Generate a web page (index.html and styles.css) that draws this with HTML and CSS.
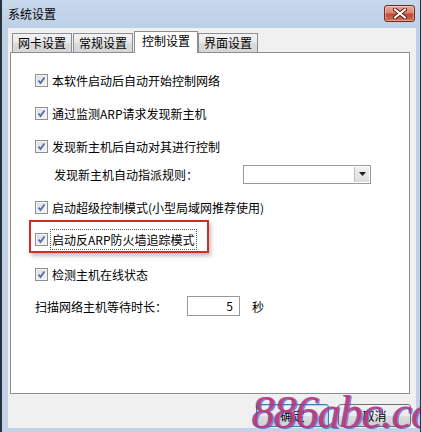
FILE: index.html
```html
<!DOCTYPE html>
<html lang="zh-CN">
<head>
  <meta charset="UTF-8" />
  <title>系统设置</title>
  <link rel="stylesheet" href="styles.css">
</head>
<body>
  <div class="window">
    <div class="titlebar">
      <span class="title">系统设置</span>
      <button class="close-btn">
        <svg width="14" height="11" viewBox="0 0 14 11">
          <path d="M2 1.5 L12 9.5 M12 1.5 L2 9.5" stroke="#5a1e16" stroke-width="4" stroke-linecap="round"/>
          <path d="M2 1.5 L12 9.5 M12 1.5 L2 9.5" stroke="#ffffff" stroke-width="2.2" stroke-linecap="round"/>
        </svg>
      </button>
    </div>

    <div class="client">
      <div class="tabs">
        <div class="tab">网卡设置</div>
        <div class="tab">常规设置</div>
        <div class="tab active">控制设置</div>
        <div class="tab">界面设置</div>
      </div>

      <div class="panel">
        <label class="row r1"><span class="check"></span>本软件启动后自动开始控制网络</label>
        <label class="row r2"><span class="check"></span>通过监测ARP请求发现新主机</label>
        <label class="row r3"><span class="check"></span>发现新主机后自动对其进行控制</label>
        <div class="row r4 indent">
          <span class="rule-label">发现新主机自动指派规则：</span>
          <div class="combo"><span class="combo-btn"><svg width="7" height="4" viewBox="0 0 7 4"><path d="M0 0 H7 L3.5 4 Z" fill="#222"/></svg></span></div>
        </div>
        <label class="row r5"><span class="check"></span>启动超级控制模式(小型局域网推荐使用)</label>
        <label class="row r6"><span class="check"></span><span class="focus">启动反ARP防火墙追踪模式</span><span class="highlight"></span></label>
        <label class="row r7"><span class="check"></span>检测主机在线状态</label>
        <div class="row r8">
          <span class="wait-label">扫描网络主机等待时长：</span>
          <div class="num-input">5</div>
          <span class="unit">秒</span>
        </div>
      </div>

      <div class="buttons">
        <button class="btn default">确定</button>
        <button class="btn">取消</button>
      </div>
    </div>

    <div class="watermark">886abc.com</div>
  </div>
</body>
</html>
```

FILE: styles.css
```css
body {
  margin: 0;
  background: #1c2b3a;
  font-family: "Noto Sans CJK SC", "Liberation Sans", sans-serif;
  font-size: 12px;
  color: #000;
}

.window {
  position: relative;
  width: 421px;
  height: 432px;
  box-sizing: border-box;
  border-left: 2px solid #26323f;
  border-right: 1px solid #26323f;
  background: linear-gradient(#c7d8ec, #bccfe4 30px, #c3d3e5);
  display: flex;
  flex-direction: column;
  overflow: hidden;
}

.titlebar {
  height: 28px;
  display: flex;
  align-items: flex-start;
  justify-content: space-between;
  padding-left: 6px;
  box-sizing: border-box;
}

.title {
  line-height: 28px;
}

.close-btn {
  margin-top: 5px;
  margin-right: 5px;
  width: 31px;
  height: 17px;
  padding: 0;
  border: 1px solid #6e2a21;
  border-radius: 3px;
  background: linear-gradient(#e9a99a, #d9826f 45%, #c44a31 55%, #d0705a);
  box-shadow: inset 0 0 0 1px rgba(255, 255, 255, 0.35);
  display: flex;
  align-items: center;
  justify-content: center;
}

.client {
  margin: 0 4px 4px 6px;
  flex: 1;
  background: #f0f0f0;
  display: flex;
  flex-direction: column;
}

.tabs {
  display: flex;
  align-items: flex-end;
  height: 24px;
  padding-left: 4px;
  position: relative;
  z-index: 1;
}

.tab {
  height: 19px;
  line-height: 18px;
  padding: 0 5px;
  box-sizing: border-box;
  border: 1px solid #8c8e94;
  border-bottom: 0;
  background: linear-gradient(#f3f3f3, #e8e8e8 50%, #dbdbdb 51%, #d6d6d6);
  margin-right: 1px;
}

.tab.active {
  height: 22px;
  margin-bottom: -1px;
  padding: 0 7px;
  background: #fff;
  margin-right: 0;
}

.panel {
  margin-left: 2px;
  width: 400px;
  height: 342px;
  box-sizing: border-box;
  border: 1px solid #8c8e94;
  background: #fff;
  display: flex;
  flex-direction: column;
  padding-top: 17px;
  padding-left: 24px;
}

.row {
  height: 20px;
  display: flex;
  align-items: center;
  position: relative;
  white-space: nowrap;
}

.r2, .r3, .r5 { margin-top: 13px; }
.r4 { margin-top: 8px; }
.r6 { margin-top: 12px; }
.r7 { margin-top: 15px; }
.r8 { margin-top: 12px; }

.check {
  width: 13px;
  height: 13px;
  box-sizing: border-box;
  border: 1px solid #8f8f8f;
  margin-right: 4px;
  background:
    url("data:image/svg+xml,%3Csvg xmlns='http://www.w3.org/2000/svg' width='11' height='11'%3E%3Cpath d='M2.5 5.5 L4.5 8 L8.5 2.5' fill='none' stroke='%23526aa8' stroke-width='1.8'/%3E%3C/svg%3E") center no-repeat,
    linear-gradient(135deg, #dcdcdc, #f6f6f6);
  box-shadow: inset 0 0 0 1px #f4f4f4;
}

.focus {
  outline: 1px dotted #555;
  outline-offset: 1px;
}

.highlight {
  position: absolute;
  left: -6px;
  top: -9px;
  width: 180px;
  height: 33px;
  box-sizing: border-box;
  border: 2px solid #d42a2a;
  box-shadow: 2px 3px 4px rgba(0, 0, 0, 0.25);
}

.indent {
  padding-left: 19px;
}

.rule-label {
  width: 189px;
}

.combo {
  width: 128px;
  height: 19px;
  box-sizing: border-box;
  border: 1px solid #9a9a9a;
  background: #fff;
  display: flex;
  justify-content: flex-end;
  padding: 1px;
}

.combo-btn {
  width: 14px;
  border-left: 1px solid #bdbdbd;
  background: linear-gradient(#f2f2f2, #dcdcdc);
  display: flex;
  align-items: center;
  justify-content: center;
}

.wait-label {
  width: 152px;
}

.num-input {
  width: 53px;
  height: 20px;
  box-sizing: border-box;
  border: 1px solid #9a9a9a;
  text-align: right;
  padding-right: 6px;
  line-height: 18px;
}

.unit {
  margin-left: 12px;
}

.buttons {
  display: flex;
  justify-content: flex-end;
  gap: 9px;
  margin-top: 10px;
  padding-right: 5px;
}

.btn {
  width: 73px;
  height: 23px;
  padding: 0;
  border: 1px solid #707070;
  border-radius: 3px;
  background: linear-gradient(#f2f2f2, #ebebeb 50%, #dddddd 51%, #cfcfcf);
  font-family: inherit;
  font-size: 12px;
  color: #000;
}

.btn.default {
  border-color: #3c7fb1;
  box-shadow: inset 0 0 0 1px #a8dcf6;
}

.watermark {
  position: absolute;
  left: 250px;
  top: 386px;
  font-family: "Liberation Serif", serif;
  font-style: italic;
  font-size: 46px;
  letter-spacing: -1px;
  color: rgba(240, 50, 70, 0.7);
  text-shadow: -1px 0 0 rgba(48, 80, 224, 0.7), 1px 1px 0 rgba(48, 80, 224, 0.7);
  pointer-events: none;
}
```
